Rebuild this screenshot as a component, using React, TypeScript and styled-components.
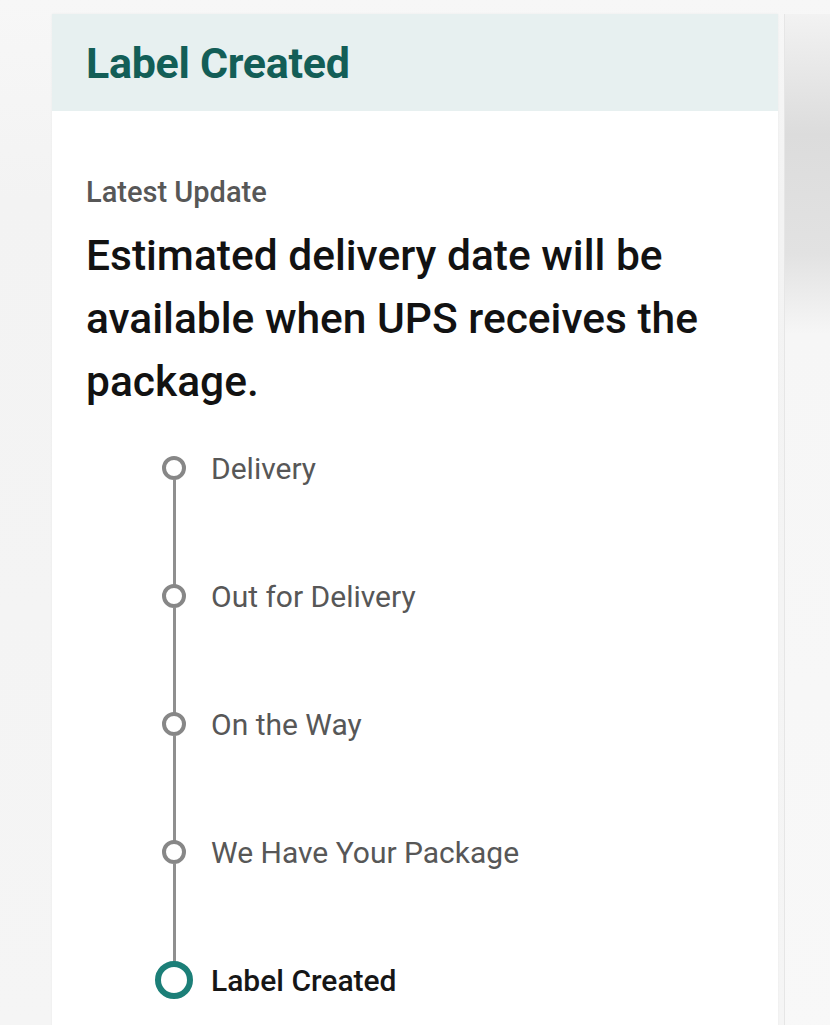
import React from "react";
import styled, { createGlobalStyle } from "styled-components";

const GlobalStyle = createGlobalStyle`
  html, body {
    margin: 0;
    padding: 0;
    background: #f4f4f4;
    font-family: Roboto, "Liberation Sans", Arial, sans-serif;
  }
`;

type Step = {
  label: string;
  current?: boolean;
};

const steps: Step[] = [
  { label: "Delivery" },
  { label: "Out for Delivery" },
  { label: "On the Way" },
  { label: "We Have Your Package" },
  { label: "Label Created", current: true },
];

const Page = styled.div`
  display: flex;
  align-items: flex-start;
  height: 1025px;
  overflow: hidden;
  padding-top: 14px;
  box-sizing: border-box;
  background: linear-gradient(180deg, #f7f7f7 0px, #f3f3f3 200px, #f5f5f5 100%);
`;

const Card = styled.section`
  margin-left: 52px;
  width: 726px;
  height: 1040px;
  flex: none;
  background: #ffffff;
  box-shadow: 0 0 2px rgba(0, 0, 0, 0.06);
`;

// edge of the next card peeking in on the right
const PeekCard = styled.div`
  margin-left: 6px;
  flex: 1;
  height: 1040px;
  background: linear-gradient(
    180deg,
    #f2f2f2 0px,
    #dcdcdc 120px,
    #e2e2e2 240px,
    #f6f6f6 320px,
    #f8f8f8 100%
  );
  border-left: 1px solid #e6e6e6;
`;

const Header = styled.header`
  height: 97px;
  display: flex;
  align-items: center;
  padding-left: 34px;
  background: #e7f0f0;
`;

const Title = styled.h1`
  margin: 0;
  font-size: 43px;
  font-weight: 700;
  color: #135e57;
  letter-spacing: -0.3px;
`;

const Body = styled.div`
  padding: 64px 34px 0 34px;
`;

const Eyebrow = styled.p`
  margin: 0;
  font-size: 29px;
  font-weight: 500;
  color: #575757;
  line-height: 34px;
`;

const Headline = styled.p`
  margin: 15px 0 0 0;
  font-size: 42.5px;
  font-weight: 500;
  line-height: 63px;
  color: #121212;
`;

const Timeline = styled.ol`
  list-style: none;
  margin: 44px 0 0 64px;
  padding: 0;
`;

const StepRow = styled.li<{ $last: boolean }>`
  display: grid;
  grid-template-columns: 48px 1fr;
  grid-template-rows: 22px ${(p) => (p.$last ? "0px" : "106px")};
  column-gap: 13px;
`;

const Marker = styled.div`
  display: flex;
  align-items: center;
  justify-content: center;
  height: 22px;
`;

const Dot = styled.span<{ $current: boolean }>`
  flex: none;
  box-sizing: border-box;
  width: ${(p) => (p.$current ? "38px" : "24px")};
  height: ${(p) => (p.$current ? "38px" : "24px")};
  border-radius: 50%;
  border: ${(p) => (p.$current ? "6px solid #1c7f78" : "4px solid #878787")};
  background: #ffffff;
`;

const Connector = styled.span`
  justify-self: center;
  width: 3px;
  height: 100%;
  background: #8f8f8f;
`;

const StepLabel = styled.span<{ $current: boolean }>`
  display: flex;
  align-items: center;
  height: 22px;
  white-space: nowrap;
  font-size: 30px;
  font-weight: ${(p) => (p.$current ? 500 : 400)};
  color: ${(p) => (p.$current ? "#161616" : "#575757")};
`;

const App: React.FC = () => {
  return (
    <>
      <GlobalStyle />
      <Page>
        <Card>
          <Header>
            <Title>Label Created</Title>
          </Header>
          <Body>
            <Eyebrow>Latest Update</Eyebrow>
            <Headline>
              Estimated delivery date will be available when UPS receives the
              package.
            </Headline>
            <Timeline>
              {steps.map((step, i) => {
                const last = i === steps.length - 1;
                const current = !!step.current;
                return (
                  <StepRow key={step.label} $last={last}>
                    <Marker>
                      <Dot $current={current} />
                    </Marker>
                    <StepLabel $current={current}>{step.label}</StepLabel>
                    {!last && <Connector />}
                  </StepRow>
                );
              })}
            </Timeline>
          </Body>
        </Card>
        <PeekCard />
      </Page>
    </>
  );
};

export default App;
